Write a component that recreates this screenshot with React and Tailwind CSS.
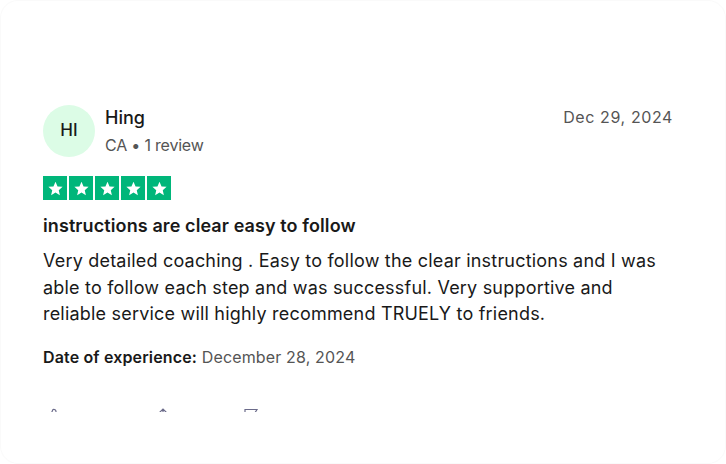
import React from 'react';

const Star = () => (
    <div className="w-6 h-6 bg-[#00b67a] flex items-center justify-center">
        <svg viewBox="0 0 24 24" className="w-[17px] h-[17px]" fill="#fff">
            <path d="M12 2.5l2.9 6.6 7.1.6-5.4 4.7 1.6 7-6.2-3.7-6.2 3.7 1.6-7L2 9.7l7.1-.6z" />
        </svg>
    </div>
);

const App = () => {
    return (
        <div className="w-[726px] h-[464px] bg-white" style={{ fontFamily: 'Inter, "Noto Sans", sans-serif' }}>
            <div className="h-full rounded-[18px] border border-[#fafafa] overflow-hidden">
                <div className="h-[411px] overflow-hidden pt-[104px] pl-[42px] pr-[52px] text-[#191919]">
                    {/* header */}
                    <div className="flex justify-between items-start">
                        <div className="flex gap-[10px]">
                            <div className="w-[52px] h-[52px] rounded-full bg-[#dcfce6] flex items-center justify-center text-[17px] font-medium">
                                HI
                            </div>
                            <div>
                                <div className="text-[18px] font-medium leading-[24px] mt-[1px]">Hing</div>
                                <div className="text-[16px] text-[#555] leading-[22px] mt-[4px] tracking-[-0.2px]">CA • 1 review</div>
                            </div>
                        </div>
                        <div className="text-[16px] text-[#555] leading-[22px] mt-[1px] tracking-[0.6px]">Dec 29, 2024</div>
                    </div>

                    {/* stars */}
                    <div className="flex gap-[2px] mt-[19px]">
                        <Star />
                        <Star />
                        <Star />
                        <Star />
                        <Star />
                    </div>

                    <h2 className="text-[18px] font-semibold leading-[24px] mt-[14px] tracking-[0.1px]">instructions are clear easy to follow</h2>
                    <p className="text-[18px] leading-[26.5px] mt-[10px] tracking-[0.2px]">
                        Very detailed coaching . Easy to follow the clear instructions and I was able to follow each step and was successful. Very supportive and reliable service will highly recommend TRUELY to friends.
                    </p>

                    <div className="text-[16px] leading-[22px] mt-[18px] tracking-[0.15px]">
                        <span className="font-semibold">Date of experience:</span>{' '}
                        <span className="text-[#555]">December 28, 2024</span>
                    </div>

                    {/* actions */}
                    <div className="flex items-center mt-[40px] text-[#6b6b8a]">
                        <svg viewBox="0 0 16 16" className="w-4 h-4 ml-[3px]" fill="none" stroke="currentColor" strokeWidth="1.2">
                            <path d="M7 1.5l-2.5 5.5v7.5h8l1.8-6.5H9.5l.5-4.5C10 2 8.5 1 7 1.5zM1.5 7h3v7.5h-3z" />
                        </svg>
                        <svg viewBox="0 0 16 16" className="w-4 h-4 ml-[93px]" fill="none" stroke="currentColor" strokeWidth="1.2">
                            <path d="M8 1v9M4.5 4.5L8 1l3.5 3.5M2 8v6.5h12V8" />
                        </svg>
                        <svg viewBox="0 0 16 16" className="w-4 h-4 ml-[72px]" fill="none" stroke="currentColor" strokeWidth="1.2">
                            <path d="M2 15V1.5h12l-2.5 4 2.5 4H2" />
                        </svg>
                    </div>
                </div>
            </div>
        </div>
    );
};

export default App;
